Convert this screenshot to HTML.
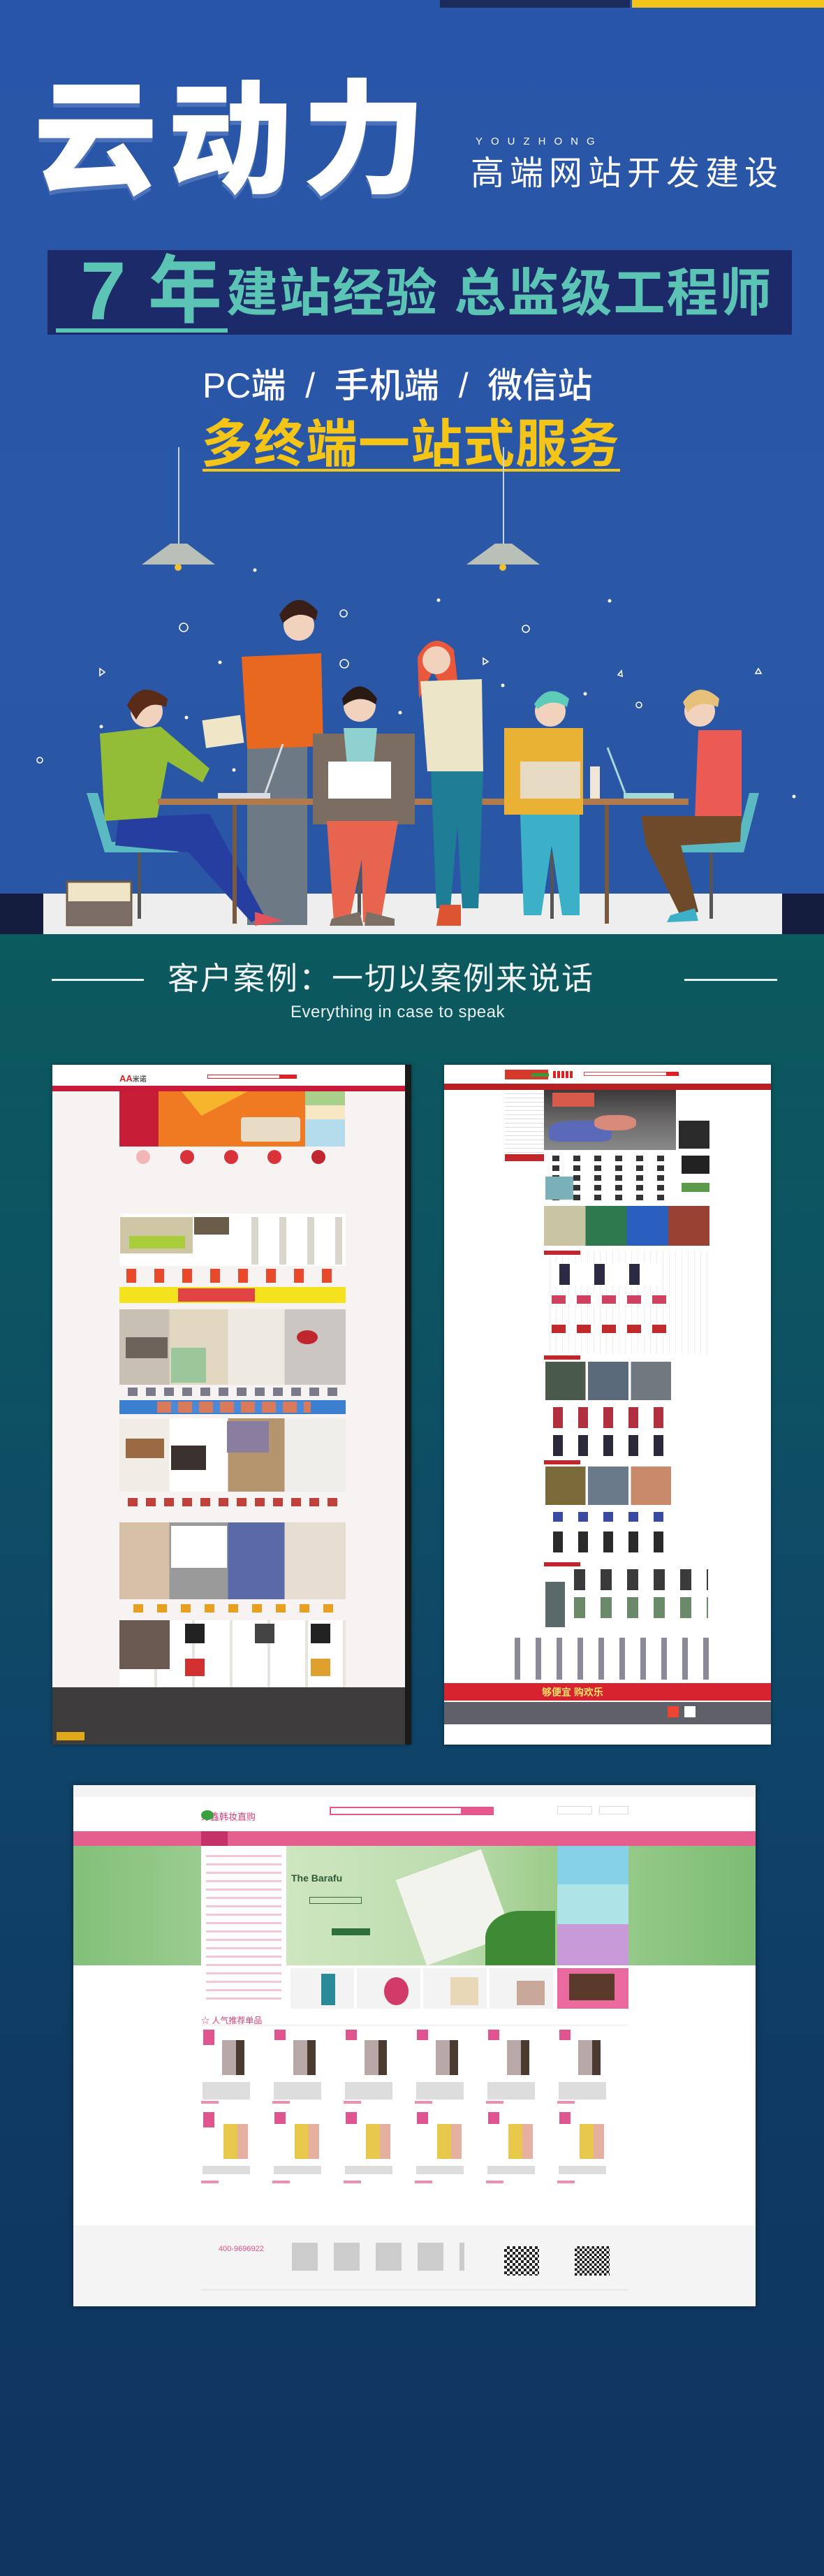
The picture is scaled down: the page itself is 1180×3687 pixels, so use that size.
<!DOCTYPE html>
<html><head><meta charset="utf-8"><style>
*{margin:0;padding:0;box-sizing:border-box}
body{width:1180px;height:3687px;position:relative;overflow:hidden;font-family:"Liberation Sans","Noto Sans CJK SC",sans-serif;background:#0f3560}
.a{position:absolute}
.cn{font-family:"Liberation Sans","Noto Sans CJK SC",sans-serif}
</style></head><body>

<!-- HERO BLUE -->
<div class="a" style="left:0;top:0;width:1180px;height:1337px;background:linear-gradient(180deg,#2955a8 0%,#2b57a7 60%,#2a56a6 100%)"></div>
<div class="a" style="left:630px;top:0;width:272px;height:11px;background:#1d2a5c"></div>
<div class="a" style="left:905px;top:0;width:275px;height:11px;background:#f3c51b"></div>

<div class="a cn" style="left:48px;top:92px;font-size:178px;line-height:220px;font-weight:900;color:#fff;letter-spacing:14px;text-shadow:0 6px 0 rgba(120,150,210,.45)">云动力</div>
<div class="a" style="left:681px;top:194px;font-size:15px;color:#fff;letter-spacing:12px">YOUZHONG</div>
<div class="a cn" style="left:674px;top:220px;font-size:48px;line-height:58px;color:#fff;letter-spacing:8px">高端网站开发建设</div>

<div class="a" style="left:68px;top:358px;width:1066px;height:121px;background:#1c2a69"></div>
<div class="a" style="left:80px;top:470px;width:246px;height:6px;background:#5cc4b4"></div>
<div class="a cn" style="left:115px;top:352px;font-size:118px;line-height:130px;font-weight:700;color:#5cc4b4">7</div>
<div class="a cn" style="left:212px;top:355px;font-size:106px;line-height:125px;font-weight:700;color:#5cc4b4">年</div>
<div class="a cn" style="left:324px;top:375px;font-size:74px;line-height:90px;font-weight:700;color:#5cc4b4;letter-spacing:2px">建站经验 总监级工程师</div>

<div class="a cn" style="left:290px;top:522px;font-size:50px;line-height:60px;color:#fff;font-weight:500;white-space:pre">PC端  /  手机端  /  微信站</div>
<div class="a cn" style="left:288px;top:596px;font-size:74px;line-height:80px;color:#f4c417;font-weight:700;letter-spacing:1px">多终端一站式服务</div>
<div class="a" style="left:290px;top:671px;width:598px;height:4px;background:#f4c417"></div>

<!-- lamps -->
<div class="a" style="left:255px;top:640px;width:2px;height:145px;background:#c9d3e6"></div>
<div class="a" style="left:720px;top:640px;width:2px;height:145px;background:#c9d3e6"></div>
<svg class="a" style="left:0;top:770px" width="1180" height="570" viewBox="0 770 1180 570">
 <polygon points="203,808 308,808 268,778 244,778" fill="#b8c0b8"/><circle cx="255" cy="812" r="5" fill="#f1c232"/>
 <polygon points="668,808 773,808 733,778 709,778" fill="#b8c0b8"/><circle cx="720" cy="812" r="5" fill="#f1c232"/>
 <g fill="#fff"><circle cx="365" cy="816" r="2.5"/><circle cx="628" cy="859" r="2.5"/><circle cx="873" cy="860" r="2.5"/><circle cx="315" cy="948" r="2.5"/><circle cx="145" cy="1040" r="2.5"/><circle cx="720" cy="981" r="2.5"/><circle cx="838" cy="993" r="2.5"/><circle cx="573" cy="1020" r="2.5"/><circle cx="1137" cy="1140" r="2.5"/><circle cx="335" cy="1102" r="2.5"/><circle cx="267" cy="1027" r="2.5"/></g>
 <g fill="none" stroke="#fff" stroke-width="1.6"><circle cx="492" cy="878" r="5"/><circle cx="263" cy="898" r="6"/><circle cx="753" cy="900" r="5"/><circle cx="493" cy="950" r="6"/><circle cx="57" cy="1088" r="4"/><circle cx="915" cy="1009" r="4"/><path d="M150 962l-7 5 0-10z"/><path d="M692 942l7 5-7 4z"/><path d="M890 960l-5 6 6 2z"/><path d="M1082 964l4-7 4 7z"/></g>
 <rect x="0" y="1279" width="62" height="58" fill="#141d3d"/><rect x="1120" y="1279" width="60" height="58" fill="#141d3d"/>
 <rect x="62" y="1279" width="1058" height="58" fill="#eeeeee"/>
 <path d="M124 1135 L140 1135 L160 1205 L255 1205 L255 1220 L150 1220 Z" fill="#5bb9c1"/>
 <rect x="197" y="1220" width="5" height="95" fill="#555"/>
 <path d="M1087 1135 L1073 1135 L1055 1205 L960 1205 L960 1220 L1065 1220 Z" fill="#5bb9c1"/>
 <rect x="1016" y="1220" width="5" height="95" fill="#555"/>
 <rect x="788" y="1220" width="5" height="95" fill="#555"/><rect x="512" y="1220" width="5" height="90" fill="#555"/>
 <rect x="96" y="1262" width="92" height="62" fill="#efe6c8" stroke="#6d5a45" stroke-width="3"/><rect x="96" y="1290" width="92" height="34" fill="#7a6e66"/>
 <rect x="354" y="1056" width="86" height="268" fill="#6d7a86"/>
 <path d="M346 940 L460 935 L463 1068 L354 1072 Z" fill="#e8681f"/>
 <circle cx="428" cy="895" r="22" fill="#f1d3bd"/><path d="M400 880 Q425 840 455 875 L452 888 Q428 870 405 892 Z" fill="#3a1f18"/>
 <rect x="292" y="1027" width="55" height="40" fill="#efe6c8" transform="rotate(-8 320 1047)"/>
 <path d="M170 1170 L300 1165 L378 1310 L360 1320 L270 1220 L165 1210 Z" fill="#253ea0"/>
 <path d="M143 1050 L230 1040 L300 1100 L290 1120 L240 1090 L225 1170 L150 1175 Z" fill="#93bd37"/>
 <circle cx="210" cy="1018" r="23" fill="#f1d3bd"/><path d="M182 1010 Q200 970 240 1000 L238 1012 Q210 1000 195 1030 Z" fill="#5a2c18"/>
 <path d="M365 1305 L405 1318 L365 1325 Z" fill="#e4535a"/>
 <rect x="226" y="1143" width="760" height="9" fill="#b07a4a"/>
 <rect x="333" y="1152" width="6" height="170" fill="#7a5a3e"/><rect x="866" y="1152" width="6" height="170" fill="#7a5a3e"/>
 <rect x="312" y="1135" width="75" height="8" fill="#d9dde2"/><path d="M380 1135 L405 1065" stroke="#d9dde2" stroke-width="3"/>
 <rect x="893" y="1135" width="72" height="8" fill="#a7d8d8"/><path d="M895 1135 L870 1070" stroke="#a7d8d8" stroke-width="3"/>
 <path d="M448 1050 L594 1050 L594 1180 L448 1180 Z" fill="#7c6d63"/>
 <path d="M468 1175 L570 1175 L545 1320 L520 1320 L518 1230 L500 1320 L478 1320 Z" fill="#e7644f"/>
 <path d="M492 1042 L540 1042 L535 1095 L497 1095 Z" fill="#8fd1d0"/>
 <circle cx="515" cy="1010" r="23" fill="#f1d3bd"/><path d="M490 1000 Q515 965 540 1000 L538 1008 Q515 992 492 1010 Z" fill="#2a1a14"/>
 <rect x="470" y="1090" width="90" height="53" fill="#fff"/>
 <path d="M475 1315 L515 1305 L520 1325 L472 1325 Z" fill="#7b6f66"/><path d="M525 1305 L565 1315 L565 1325 L522 1325 Z" fill="#7b6f66"/>
 <path d="M598 940 Q620 900 650 930 L658 1000 L640 1000 L620 960 L600 1000 Z" fill="#e9583a"/>
 <circle cx="625" cy="945" r="20" fill="#f1d3bd"/>
 <path d="M602 975 L690 972 L692 1104 L612 1104 Z" fill="#ece5c8"/>
 <path d="M617 1104 L692 1104 L685 1300 L662 1300 L655 1180 L645 1300 L625 1300 Z" fill="#1e7e95"/>
 <path d="M630 1295 L660 1295 L660 1325 L625 1325 Z" fill="#dd5530"/>
 <path d="M722 1042 L835 1042 L835 1166 L722 1166 Z" fill="#eab234"/>
 <path d="M745 1166 L830 1166 L830 1310 L805 1310 L790 1210 L775 1310 L750 1310 Z" fill="#3bb0c7"/>
 <circle cx="788" cy="1018" r="22" fill="#f1d3bd"/><path d="M765 1008 Q785 975 815 1000 L812 1012 Q790 998 770 1015 Z" fill="#5ecbb9"/>
 <rect x="745" y="1090" width="86" height="53" fill="#e7dcc3"/>
 <rect x="845" y="1097" width="14" height="46" fill="#efe6d8"/>
 <path d="M1000 1045 L1062 1045 L1062 1172 L995 1172 Z" fill="#ec5b53"/>
 <path d="M918 1168 L1062 1168 L1060 1205 L975 1210 L1000 1305 L975 1312 L925 1210 Z" fill="#6e4a2a"/>
 <circle cx="1002" cy="1018" r="22" fill="#f1d3bd"/><path d="M978 1005 Q1000 972 1030 1000 L1028 1012 Q1000 1000 985 1020 Z" fill="#e7c079"/>
 <path d="M960 1310 L995 1300 L1000 1318 L955 1320 Z" fill="#3bb0c7"/>
</svg>

<!-- TEAL / NAVY SECTION -->
<div class="a" style="left:0;top:1337px;width:1180px;height:2350px;background:linear-gradient(180deg,#0b5a5d 0%,#0d5263 25%,#0f4468 50%,#0f3a62 70%,#0f3560 100%)"></div>
<div class="a" style="left:74px;top:1401px;width:132px;height:3px;background:#e8f0f0"></div>
<div class="a" style="left:980px;top:1401px;width:133px;height:3px;background:#e8f0f0"></div>
<div class="a cn" style="left:240px;top:1373px;font-size:45px;line-height:56px;color:#f2f6f6;letter-spacing:2px">客户案例：一切以案例来说话</div>
<div class="a" style="left:416px;top:1435px;font-size:24px;line-height:28px;color:#e8f0f0;letter-spacing:.5px">Everything in case to speak</div>

<!-- SCREENSHOT 1 -->
<div class="a" style="left:75px;top:1524px;width:514px;height:973px;background:#f7f3f2;box-shadow:0 0 6px rgba(0,0,0,.4);overflow:hidden">
 <div class="a" style="left:0;top:0;width:514px;height:30px;background:#fff"></div>
 <div class="a" style="left:96px;top:12px;font-size:13px;font-weight:700;color:#d8232a">AA<span style="color:#555;font-size:10px">米诺</span></div>
 <div class="a" style="left:222px;top:14px;width:115px;height:6px;border:1px solid #d8232a"></div><div class="a" style="left:325px;top:14px;width:25px;height:6px;background:#d8232a"></div>
 <div class="a" style="left:0;top:30px;width:514px;height:8px;background:#c8193a"></div>
 <div class="a" style="left:96px;top:38px;width:56px;height:79px;background:#c81d36"></div>
 <div class="a" style="left:152px;top:38px;width:210px;height:79px;background:#ef7a22"></div>
 <div class="a" style="left:185px;top:38px;width:95px;height:35px;background:#f6b52d;clip-path:polygon(0 0,100% 0,30% 100%)"></div>
 <div class="a" style="left:270px;top:75px;width:85px;height:35px;background:#e8dcc6;border-radius:4px"></div>
 <div class="a" style="left:362px;top:38px;width:57px;height:20px;background:#a8d08a"></div>
 <div class="a" style="left:362px;top:58px;width:57px;height:20px;background:#f7e7c2"></div>
 <div class="a" style="left:362px;top:78px;width:57px;height:39px;background:#b4dcec"></div>
 <div class="a" style="left:120px;top:122px;width:20px;height:20px;border-radius:50%;background:#f2b6b6"></div>
 <div class="a" style="left:183px;top:122px;width:20px;height:20px;border-radius:50%;background:#d9323a"></div>
 <div class="a" style="left:246px;top:122px;width:20px;height:20px;border-radius:50%;background:#d9323a"></div>
 <div class="a" style="left:308px;top:122px;width:20px;height:20px;border-radius:50%;background:#d9323a"></div>
 <div class="a" style="left:371px;top:122px;width:20px;height:20px;border-radius:50%;background:#c0262e"></div>
 <div class="a" style="left:96px;top:213px;width:324px;height:75px;background:#fff"></div>
 <div class="a" style="left:97px;top:218px;width:104px;height:52px;background:#cfc6a6"></div>
 <div class="a" style="left:110px;top:245px;width:80px;height:18px;background:#a9cc3a"></div>
 <div class="a" style="left:203px;top:218px;width:50px;height:25px;background:#6b5c4a"></div>
 <div class="a" style="left:255px;top:218px;width:160px;height:68px;background:repeating-linear-gradient(90deg,#fff 0 30px,#d9d4cc 30px 40px)"></div>
 <div class="a" style="left:96px;top:292px;width:324px;height:20px;background:repeating-linear-gradient(90deg,#f7f3f2 0 10px,#e64a2a 10px 24px,#f7f3f2 24px 40px)"></div>
 <div class="a" style="left:96px;top:318px;width:324px;height:23px;background:#f5e21f"></div>
 <div class="a" style="left:180px;top:320px;width:110px;height:19px;background:#e04444"></div>
 <div class="a" style="left:96px;top:350px;width:324px;height:108px;background:linear-gradient(90deg,#c8c0b2 0 22%,#e2d8c2 22% 48%,#eeeae2 48% 73%,#ccc6c2 73% 100%)"></div>
 <div class="a" style="left:105px;top:390px;width:60px;height:30px;background:#6e635a"></div>
 <div class="a" style="left:170px;top:405px;width:50px;height:50px;background:#9bc79b"></div>
 <div class="a" style="left:350px;top:380px;width:30px;height:20px;background:#c0262e;border-radius:50%"></div>
 <div class="a" style="left:96px;top:462px;width:324px;height:12px;background:repeating-linear-gradient(90deg,#f7f3f2 0 12px,#7a7a8a 12px 26px)"></div>
 <div class="a" style="left:96px;top:480px;width:324px;height:20px;background:#3a7fd0"></div>
 <div class="a" style="left:150px;top:482px;width:220px;height:16px;background:repeating-linear-gradient(90deg,#d97a5a 0 20px,#4a8ad8 20px 30px)"></div>
 <div class="a" style="left:96px;top:506px;width:324px;height:105px;background:linear-gradient(90deg,#f2ece6 0 22%,#fff 22% 48%,#b5956e 48% 73%,#f0eeea 73% 100%)"></div>
 <div class="a" style="left:105px;top:535px;width:55px;height:28px;background:#9a6a42"></div>
 <div class="a" style="left:170px;top:545px;width:50px;height:35px;background:#3a302e"></div>
 <div class="a" style="left:250px;top:510px;width:60px;height:45px;background:#8a7ea0"></div>
 <div class="a" style="left:96px;top:620px;width:324px;height:12px;background:repeating-linear-gradient(90deg,#f7f3f2 0 12px,#c0403a 12px 26px)"></div>
 <div class="a" style="left:96px;top:655px;width:324px;height:110px;background:linear-gradient(90deg,#d8c0a8 0 22%,#9a9a9a 22% 48%,#5a6aa8 48% 73%,#e6dcd0 73% 100%)"></div>
 <div class="a" style="left:170px;top:660px;width:80px;height:60px;background:#fff"></div>
 <div class="a" style="left:96px;top:772px;width:324px;height:12px;background:repeating-linear-gradient(90deg,#f7f3f2 0 20px,#e8a020 20px 34px)"></div>
 <div class="a" style="left:96px;top:795px;width:324px;height:105px;background:repeating-linear-gradient(90deg,#fff 0 50px,#e8e4e0 50px 54px)"></div>
 <div class="a" style="left:96px;top:795px;width:72px;height:70px;background:#6a5a50"></div>
 <div class="a" style="left:190px;top:800px;width:28px;height:28px;background:#222"></div><div class="a" style="left:290px;top:800px;width:28px;height:28px;background:#444"></div><div class="a" style="left:370px;top:800px;width:28px;height:28px;background:#222"></div>
 <div class="a" style="left:190px;top:850px;width:28px;height:25px;background:#d03030"></div><div class="a" style="left:370px;top:850px;width:28px;height:25px;background:#e0a030"></div>
 <div class="a" style="left:96px;top:905px;width:324px;height:10px;background:repeating-linear-gradient(90deg,#f7f3f2 0 15px,#8a6a4a 15px 30px)"></div>
 <div class="a" style="left:0;top:891px;width:514px;height:82px;background:#3d3b3b"></div>
 <div class="a" style="left:6px;top:955px;width:40px;height:12px;background:#e0a818"></div>
 <div class="a" style="left:505px;top:0;width:9px;height:973px;background:#1a1a1a"></div>
</div>

<!-- SCREENSHOT 2 -->
<div class="a" style="left:636px;top:1524px;width:468px;height:973px;background:#fff;box-shadow:0 0 6px rgba(0,0,0,.4);overflow:hidden">
 <div class="a" style="left:87px;top:7px;width:62px;height:14px;background:#d63a2a"></div>
 <div class="a" style="left:125px;top:12px;width:25px;height:5px;background:#3a9a3a"></div>
 <div class="a" style="left:156px;top:9px;width:28px;height:10px;background:repeating-linear-gradient(90deg,#d22 0 4px,#fff 4px 6px)"></div>
 <div class="a" style="left:200px;top:10px;width:130px;height:6px;border:1px solid #e44"></div><div class="a" style="left:318px;top:10px;width:18px;height:6px;background:#d22"></div>
 <div class="a" style="left:0;top:27px;width:468px;height:9px;background:#b81f22"></div>
 <div class="a" style="left:87px;top:36px;width:56px;height:90px;background:repeating-linear-gradient(180deg,#fff 0 5px,#ddd 5px 6px)"></div>
 <div class="a" style="left:87px;top:128px;width:56px;height:10px;background:#c0262a"></div>
 <div class="a" style="left:143px;top:36px;width:189px;height:86px;background:linear-gradient(180deg,#3a3838,#6a6868 50%,#8a8a8a)"></div>
 <div class="a" style="left:150px;top:80px;width:90px;height:30px;background:#5a6ab8;border-radius:40% 40% 20% 20%"></div>
 <div class="a" style="left:215px;top:72px;width:60px;height:22px;background:#d88a7a;border-radius:40%"></div>
 <div class="a" style="left:155px;top:40px;width:60px;height:20px;background:#d85a4a"></div>
 <div class="a" style="left:336px;top:80px;width:44px;height:40px;background:#2a2a2a"></div>
 <div class="a" style="left:143px;top:130px;width:190px;height:70px;background:repeating-linear-gradient(90deg,#fff 0 12px,#333 12px 22px,#fff 22px 30px)"></div>
 <div class="a" style="left:143px;top:130px;width:190px;height:70px;background:repeating-linear-gradient(180deg,transparent 0 8px,#fff 8px 14px)"></div>
 <div class="a" style="left:145px;top:160px;width:40px;height:33px;background:#7ab0b8"></div>
 <div class="a" style="left:340px;top:130px;width:40px;height:65px;background:linear-gradient(#222 0 40%,#fff 40% 60%,#5a9a4a 60% 80%,#fff 80%)"></div>
 <div class="a" style="left:143px;top:202px;width:237px;height:57px;background:linear-gradient(90deg,#c8c4a4 0 25%,#2e7a4e 25% 50%,#2a5fc0 50% 75%,#9a4232 75%)"></div>
 <div class="a" style="left:143px;top:266px;width:237px;height:148px;background:repeating-linear-gradient(90deg,#fff 0 8px,#f0f0f0 8px 9px)"></div>
 <div class="a" style="left:143px;top:266px;width:52px;height:6px;background:#c0262a"></div>
 <div class="a" style="left:155px;top:285px;width:150px;height:30px;background:repeating-linear-gradient(90deg,#fff 0 10px,#2a2a44 10px 25px,#fff 25px 50px)"></div>
 <div class="a" style="left:148px;top:330px;width:180px;height:12px;background:repeating-linear-gradient(90deg,#fff 0 6px,#d04060 6px 26px,#fff 26px 36px)"></div>
 <div class="a" style="left:148px;top:372px;width:180px;height:12px;background:repeating-linear-gradient(90deg,#fff 0 6px,#c02a2a 6px 26px,#fff 26px 36px)"></div>
 <div class="a" style="left:143px;top:416px;width:52px;height:6px;background:#c0262a"></div>
 <div class="a" style="left:145px;top:425px;width:180px;height:55px;background:linear-gradient(90deg,#4a5a4a 0 32%,#fff 32% 34%,#5a6a7a 34% 66%,#fff 66% 68%,#707880 68%)"></div>
 <div class="a" style="left:148px;top:490px;width:180px;height:30px;background:repeating-linear-gradient(90deg,#fff 0 8px,#b03040 8px 22px,#fff 22px 36px)"></div>
 <div class="a" style="left:148px;top:530px;width:180px;height:30px;background:repeating-linear-gradient(90deg,#fff 0 8px,#2a2a3a 8px 22px,#fff 22px 36px)"></div>
 <div class="a" style="left:143px;top:566px;width:52px;height:6px;background:#c0262a"></div>
 <div class="a" style="left:145px;top:575px;width:180px;height:55px;background:linear-gradient(90deg,#7a6a3a 0 32%,#fff 32% 34%,#6a7a8a 34% 66%,#fff 66% 68%,#c88a6a 68%)"></div>
 <div class="a" style="left:148px;top:640px;width:180px;height:14px;background:repeating-linear-gradient(90deg,#fff 0 8px,#3a4aa0 8px 22px,#fff 22px 36px)"></div>
 <div class="a" style="left:148px;top:668px;width:180px;height:30px;background:repeating-linear-gradient(90deg,#fff 0 8px,#2a2a2a 8px 22px,#fff 22px 36px)"></div>
 <div class="a" style="left:143px;top:712px;width:52px;height:6px;background:#c0262a"></div>
 <div class="a" style="left:145px;top:740px;width:28px;height:65px;background:#5a6a6a"></div>
 <div class="a" style="left:178px;top:722px;width:200px;height:30px;background:repeating-linear-gradient(90deg,#fff 0 8px,#3a3a3a 8px 24px,#fff 24px 38px)"></div>
 <div class="a" style="left:178px;top:762px;width:200px;height:30px;background:repeating-linear-gradient(90deg,#fff 0 8px,#6a8a6a 8px 24px,#fff 24px 38px)"></div>
 <div class="a" style="left:87px;top:820px;width:293px;height:60px;background:repeating-linear-gradient(90deg,#fff 0 14px,#8a8a9a 14px 22px,#fff 22px 30px)"></div>
 <div class="a" style="left:0;top:885px;width:468px;height:25px;background:#d7232f"></div>
 <div class="a cn" style="left:140px;top:888px;width:120px;height:18px;font-size:14px;color:#ffe36a;font-weight:700">够便宜 购欢乐</div>
 <div class="a" style="left:0;top:912px;width:468px;height:32px;background:#5f6068"></div>
 <div class="a" style="left:320px;top:918px;width:16px;height:16px;background:#e43"></div><div class="a" style="left:344px;top:918px;width:16px;height:16px;background:#fff"></div>
</div>

<!-- SCREENSHOT 3 -->
<div class="a" style="left:105px;top:2555px;width:977px;height:746px;background:#fff;box-shadow:0 0 8px rgba(0,0,0,.45);overflow:hidden">
 <div class="a" style="left:0;top:0;width:977px;height:17px;background:#f3f3f3"></div>
 <div class="a cn" style="left:183px;top:35px;width:130px;height:18px;font-size:13px;color:#d23f7a">绿鑫韩妆直购</div>
 <div class="a" style="left:183px;top:36px;width:18px;height:14px;background:#3aa040;border-radius:50%"></div>
 <div class="a" style="left:367px;top:31px;width:190px;height:12px;border:2px solid #e2588a"></div>
 <div class="a" style="left:557px;top:31px;width:45px;height:12px;background:#e2588a"></div>
 <div class="a" style="left:693px;top:30px;width:50px;height:12px;border:1px solid #ddd"></div><div class="a" style="left:753px;top:30px;width:42px;height:12px;border:1px solid #ddd"></div>
 <div class="a" style="left:0;top:66px;width:977px;height:21px;background:#e45e8e"></div>
 <div class="a" style="left:183px;top:66px;width:38px;height:21px;background:#c53269"></div>
 <div class="a" style="left:0;top:87px;width:977px;height:171px;background:linear-gradient(90deg,#83c07a,#a7d39a 30%,#c8e4bc 50%,#a2d196 70%,#7dbc74)"></div>
 <div class="a" style="left:183px;top:87px;width:122px;height:236px;background:#fff"></div>
 <div class="a" style="left:190px;top:95px;width:108px;height:220px;background:repeating-linear-gradient(180deg,#fff 0 5px,#f4c6d6 5px 8px,#fff 8px 12px)"></div>
 <div class="a" style="left:305px;top:87px;width:388px;height:171px;background:linear-gradient(90deg,#cfe6c0,#bcdcae 60%,#9ccc8a)"></div>
 <div class="a" style="left:312px;top:125px;width:110px;height:16px;font-size:14px;font-weight:700;color:#2c5a3a">The Barafu</div>
 <div class="a" style="left:338px;top:160px;width:75px;height:10px;border:1px solid #3a6a4a"></div>
 <div class="a" style="left:370px;top:205px;width:55px;height:10px;background:#2f6e3e"></div>
 <div class="a" style="left:480px;top:110px;width:130px;height:130px;background:#f3f3ee;transform:rotate(-20deg)"></div>
 <div class="a" style="left:590px;top:180px;width:100px;height:78px;background:#3f8a35;border-radius:50% 0 0 0"></div>
 <div class="a" style="left:693px;top:87px;width:102px;height:55px;background:#86d0e8"></div>
 <div class="a" style="left:693px;top:142px;width:102px;height:57px;background:#aee3e8"></div>
 <div class="a" style="left:693px;top:199px;width:102px;height:59px;background:#c99ad8"></div>
 <div class="a" style="left:311px;top:262px;width:91px;height:58px;background:#f3f3f3"></div><div class="a" style="left:355px;top:270px;width:20px;height:45px;background:#2a8a9a"></div>
 <div class="a" style="left:406px;top:262px;width:91px;height:58px;background:#f3f3f3"></div><div class="a" style="left:445px;top:275px;width:35px;height:40px;background:#d23a6a;border-radius:50%"></div>
 <div class="a" style="left:501px;top:262px;width:91px;height:58px;background:#f3f3f3"></div><div class="a" style="left:540px;top:275px;width:40px;height:40px;background:#e8d8b8"></div>
 <div class="a" style="left:596px;top:262px;width:91px;height:58px;background:#f3f3f3"></div><div class="a" style="left:635px;top:280px;width:40px;height:35px;background:#c8a898"></div>
 <div class="a" style="left:693px;top:262px;width:102px;height:58px;background:#ea6aa0"></div>
 <div class="a" style="left:710px;top:270px;width:65px;height:38px;background:#5a3a2a"></div>
 <div class="a cn" style="left:183px;top:328px;width:150px;height:14px;font-size:12px;color:#d23f7a">☆ 人气推荐单品</div>
 <div class="a" style="left:183px;top:343px;width:612px;height:1px;background:#eee"></div>
 <div class="a" style="left:186px;top:350px;width:610px;height:22px;background:repeating-linear-gradient(90deg,#e05590 0 16px,#fff 16px 102px)"></div>
 <div class="a" style="left:205px;top:365px;width:570px;height:50px;background:repeating-linear-gradient(90deg,#fff 0 8px,#b8a8a8 8px 28px,#4a3a30 28px 40px,#fff 40px 102px)"></div>
 <div class="a" style="left:183px;top:425px;width:612px;height:25px;background:repeating-linear-gradient(90deg,#fff 0 2px,#ddd 2px 70px,#fff 70px 102px)"></div>
 <div class="a" style="left:183px;top:452px;width:612px;height:4px;background:repeating-linear-gradient(90deg,#f08cb0 0 25px,#fff 25px 102px)"></div>
 <div class="a" style="left:186px;top:468px;width:610px;height:22px;background:repeating-linear-gradient(90deg,#e05590 0 16px,#fff 16px 102px)"></div>
 <div class="a" style="left:205px;top:485px;width:570px;height:50px;background:repeating-linear-gradient(90deg,#fff 0 10px,#e8c84a 10px 30px,#e6b0a0 30px 45px,#fff 45px 102px)"></div>
 <div class="a" style="left:183px;top:545px;width:612px;height:12px;background:repeating-linear-gradient(90deg,#fff 0 2px,#ddd 2px 70px,#fff 70px 102px)"></div>
 <div class="a" style="left:183px;top:566px;width:612px;height:4px;background:repeating-linear-gradient(90deg,#f08cb0 0 25px,#fff 25px 102px)"></div>
 <div class="a" style="left:0;top:630px;width:977px;height:116px;background:#f4f4f4"></div>
 <div class="a" style="left:208px;top:658px;font-size:11px;color:#e0508a">400-9696922</div>
 <div class="a" style="left:310px;top:655px;width:250px;height:40px;background:repeating-linear-gradient(90deg,#f4f4f4 0 3px,#ccc 3px 40px,#f4f4f4 40px 60px)"></div>
 <div class="a" style="left:617px;top:660px;width:50px;height:42px;background:repeating-conic-gradient(#222 0 25%,#fff 0 50%) 0 0/8px 8px"></div>
 <div class="a" style="left:718px;top:660px;width:50px;height:42px;background:repeating-conic-gradient(#111 0 25%,#fff 0 50%) 0 0/7px 7px"></div>
 <div class="a" style="left:183px;top:722px;width:612px;height:1px;background:#ddd"></div>
</div>

</body></html>
